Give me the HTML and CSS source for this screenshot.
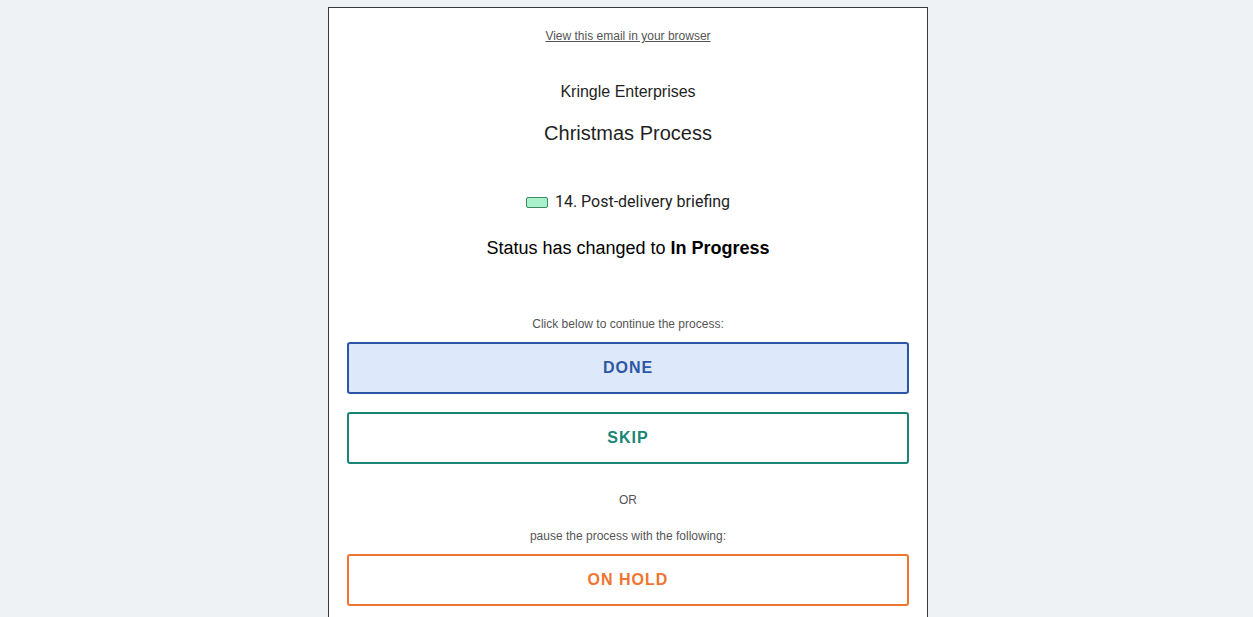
FILE: index.html
```html
<!DOCTYPE html>
<html>
<head>
<meta charset="utf-8">
<link rel="stylesheet" href="styles.css">
</head>
<body>
<div class="card">
  <div class="view"><a href="#">View this email in your browser</a></div>
  <div class="org">Kringle Enterprises</div>
  <div class="process">Christmas Process</div>
  <div class="task"><span class="chip"></span>14. Post-delivery briefing</div>
  <div class="status">Status has changed to <b>In Progress</b></div>
  <div class="note note-click">Click below to continue the process:</div>
  <a class="btn btn-done" href="#">DONE</a>
  <a class="btn btn-skip" href="#">SKIP</a>
  <div class="note note-or">OR</div>
  <div class="note note-pause">pause the process with the following:</div>
  <a class="btn btn-hold" href="#">ON HOLD</a>
</div>
</body>
</html>
```
FILE: styles.css
```css
html, body {
  margin: 0;
  padding: 0;
  background: #eef2f5;
  font-family: "Liberation Sans", Arial, sans-serif;
}
body {
  padding-top: 7px;
  padding-left: 3px;
}
.card {
  box-sizing: border-box;
  width: 600px;
  margin: 0 auto;
  background: #fff;
  border: 1px solid #3a3a3a;
  border-bottom: none;
  padding: 20px 18px 40px;
  text-align: center;
}
.view {
  font-size: 12px;
  line-height: 16px;
}
.view a {
  color: #555;
  text-decoration: underline;
}
.org {
  margin-top: 38px;
  font-size: 16px;
  line-height: 20px;
  color: #1f1f1f;
}
.process {
  margin-top: 19px;
  font-size: 20px;
  line-height: 24px;
  color: #1f1f1f;
}
.task {
  margin-top: 47px;
  font-family: Roboto, "Liberation Sans", sans-serif;
  font-size: 16px;
  line-height: 20px;
  color: #222;
  display: flex;
  justify-content: center;
  align-items: center;
  gap: 7px;
}
.chip {
  display: inline-block;
  box-sizing: border-box;
  width: 22px;
  height: 11px;
  background: #a9f1cb;
  border: 1px solid #3d8a62;
  border-radius: 2px;
}
.status {
  margin-top: 25px;
  font-size: 18px;
  line-height: 22px;
  color: #000;
}
.note {
  font-size: 12px;
  line-height: 16px;
  color: #555;
}
.note-click { margin-top: 57px; }
.note-or { margin-top: 28px; }
.note-pause { margin-top: 20px; }
.btn {
  display: flex;
  align-items: center;
  justify-content: center;
  box-sizing: border-box;
  height: 52px;
  margin-top: 10px;
  border: 2px solid;
  border-radius: 3px;
  font-size: 16px;
  font-weight: bold;
  letter-spacing: 1px;
  text-decoration: none;
  background: #fff;
}
.btn-done {
  background: #dde9fb;
  border-color: #2d57a6;
  color: #2d57a6;
}
.btn-skip {
  margin-top: 18px;
  border-color: #1a8576;
  color: #1a8576;
}
.btn-hold {
  border-color: #ef7430;
  color: #ef7430;
}
```
